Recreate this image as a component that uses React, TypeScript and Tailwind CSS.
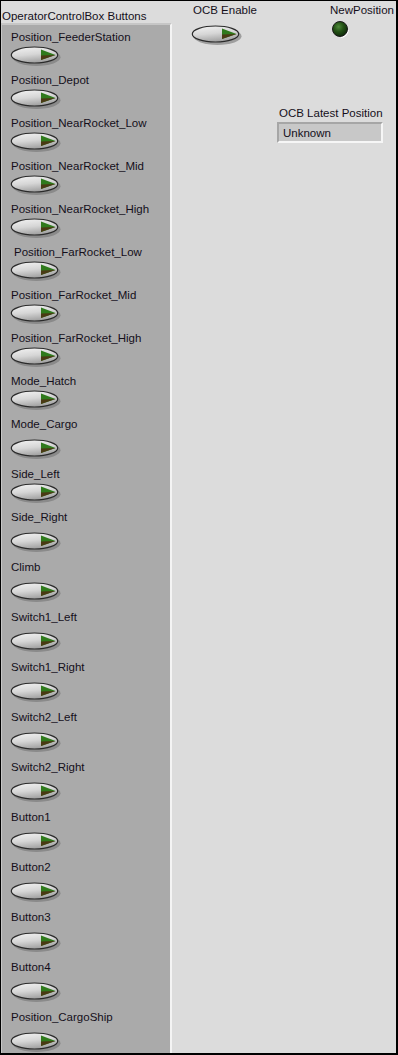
import React from "react";

type Item = { label: string; tall?: boolean; indent?: boolean };

const items: Item[] = [
  { label: "Position_FeederStation" },
  { label: "Position_Depot" },
  { label: "Position_NearRocket_Low" },
  { label: "Position_NearRocket_Mid" },
  { label: "Position_NearRocket_High" },
  { label: "Position_FarRocket_Low", indent: true },
  { label: "Position_FarRocket_Mid" },
  { label: "Position_FarRocket_High" },
  { label: "Mode_Hatch" },
  { label: "Mode_Cargo", tall: true },
  { label: "Side_Left" },
  { label: "Side_Right", tall: true },
  { label: "Climb", tall: true },
  { label: "Switch1_Left", tall: true },
  { label: "Switch1_Right", tall: true },
  { label: "Switch2_Left", tall: true },
  { label: "Switch2_Right", tall: true },
  { label: "Button1", tall: true },
  { label: "Button2", tall: true },
  { label: "Button3", tall: true },
  { label: "Button4", tall: true },
  { label: "Position_CargoShip", tall: true },
];

function OkButton({ id }: { id: string }) {
  return (
    <svg width="52" height="22" viewBox="0 0 52 22" className="block">
      <defs>
        <linearGradient id={`g-${id}`} x1="0" y1="0" x2="0.3" y2="1">
          <stop offset="0" stopColor="#f4f4f4" />
          <stop offset="0.55" stopColor="#d6d6d6" />
          <stop offset="1" stopColor="#a4a4a4" />
        </linearGradient>
      </defs>
      {/* drop shadow */}
      <ellipse cx="26.5" cy="11.2" rx="24" ry="8.8" fill="#747474" opacity="0.6" />
      <ellipse cx="24.5" cy="9" rx="23.2" ry="8" fill={`url(#g-${id})`} stroke="#2a2a2a" strokeWidth="1.2" />
      {/* indicator triangle */}
      <polygon points="31,3.5 45.5,9 31,14" fill="#2f7a1c" />
      <polygon points="31,9.5 45.5,9 31,14" fill="#4a3a14" />
    </svg>
  );
}

function Led() {
  return (
    <svg width="20" height="20" viewBox="0 0 20 20" className="block">
      <defs>
        <radialGradient id="led" cx="0.4" cy="0.35" r="0.65">
          <stop offset="0" stopColor="#4f8a3c" />
          <stop offset="0.5" stopColor="#245216" />
          <stop offset="1" stopColor="#0f2a0a" />
        </radialGradient>
      </defs>
      <path d="M17 10 A8 8 0 0 1 10 17" stroke="#ffffff" strokeWidth="2" fill="none" />
      <circle cx="9" cy="9" r="7.5" fill="url(#led)" stroke="#1a1a1a" strokeWidth="1" />
    </svg>
  );
}

export default function App() {
  return (
    <div
      className="flex h-[1055px] w-[398px] overflow-hidden border-t border-l border-r-2 border-b-2 border-black bg-[#dcdcdc] text-[11.5px] leading-[14px] text-[#140f1a]"
      style={{ fontFamily: '"Liberation Sans", Arial, sans-serif' }}
    >
      {/* Left: button cluster */}
      <div className="flex w-[171px] shrink-0 flex-col">
        <div className="h-[23px] pl-[1px] pt-[8px] whitespace-nowrap">OperatorControlBox Buttons</div>
        <div className="flex flex-1 flex-col border-t-2 border-l border-r-2 border-b-2 border-t-[#c6c6c6] border-l-[#c6c6c6] border-r-[#f4f4f4] border-b-[#cfcfcf] bg-[#aaaaaa] pt-[5px]">
          {items.map((it) => (
            <div key={it.label} className={`flex flex-col pl-[8px] ${it.tall ? "h-[50px]" : "h-[43px]"}`}>
              <div className={`whitespace-nowrap ${it.indent ? "pl-[4px]" : "pl-[1px]"}`}>{it.label}</div>
              <div className={it.tall ? "mt-[8px]" : "mt-[2px]"}>
                <OkButton id={it.label} />
              </div>
            </div>
          ))}
        </div>
      </div>

      {/* Right: status controls */}
      <div className="flex flex-1 flex-col">
        <div className="flex pt-[2px]">
          <div className="flex w-[158px] flex-col pl-[19px]">
            <div className="pl-[2px] whitespace-nowrap">OCB Enable</div>
            <div className="mt-[8px]">
              <OkButton id="ocb-enable" />
            </div>
          </div>
          <div className="flex flex-col">
            <div className="whitespace-nowrap">NewPosition</div>
            <div className="mt-[3px] pl-[1px]">
              <Led />
            </div>
          </div>
        </div>
        <div className="mt-[59px] flex flex-col pl-[105px]">
          <div className="pl-[2px] whitespace-nowrap">OCB Latest Position</div>
          <div className="mt-[2px] flex h-[21px] w-[106px] items-center border-2 border-t-[#a6a6a6] border-l-[#a6a6a6] border-r-[#f6f6f6] border-b-[#f6f6f6] bg-[#c8c8c8] pl-[4px]">
            Unknown
          </div>
        </div>
      </div>
    </div>
  );
}
